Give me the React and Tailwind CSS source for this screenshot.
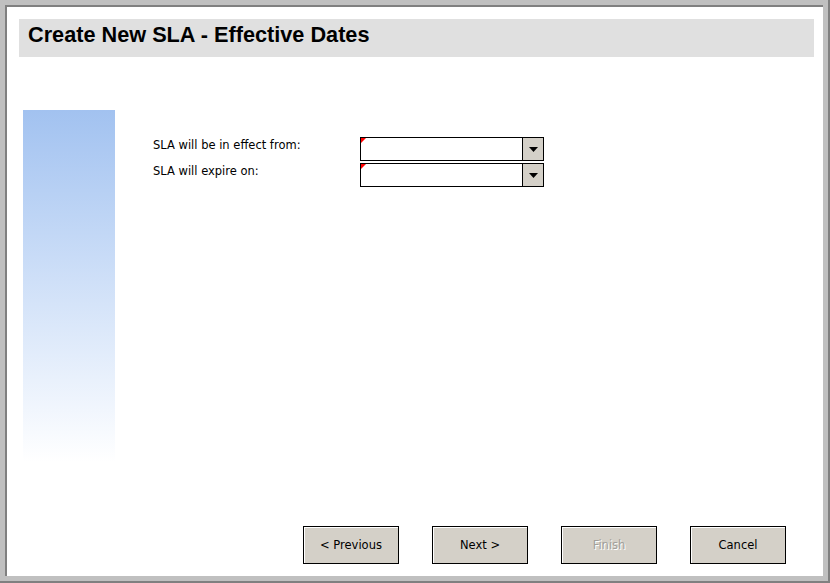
import React from "react";

const ui = { fontFamily: '"Liberation Sans", Arial, sans-serif' };
const win = { fontFamily: '"DejaVu Sans", Tahoma, sans-serif' };

const DateField = () => (
  <div className="relative flex h-[24px] w-[184px] border border-black bg-white">
    {/* required marker */}
    <svg className="absolute left-0 top-0" width="5" height="5" viewBox="0 0 5 5">
      <polygon points="0,0 5,0 0,5" fill="#ff0000" />
    </svg>
    <div className="flex-1" />
    <div className="flex w-[21px] items-center justify-center border-l border-black bg-[#d4d0c8]">
      <svg width="9" height="5" viewBox="0 0 9 5">
        <polygon points="0,0 9,0 4.5,5" fill="#000000" />
      </svg>
    </div>
  </div>
);

const WizardButton = ({ label, disabled }) => (
  <button
    type="button"
    disabled={disabled}
    className="h-[38px] w-[96px] border border-black bg-[#d4d0c8] pt-[1px] text-[11.5px] shadow-[inset_1px_1px_0_#ffffff]"
    style={win}
  >
    {disabled ? (
      <span className="text-[#a19f9a] [text-shadow:1px_1px_0_#ffffff]">{label}</span>
    ) : (
      <span className="text-black">{label}</span>
    )}
  </button>
);

const App = () => {
  return (
    <div className="h-[583px] w-[830px] border-b-2 border-r-2 border-[#808080]" style={ui}>
      <div className="h-full w-full border-[5px] border-[#c0c0c0]">
        <div className="flex h-full w-full flex-col border-l-2 border-t-2 border-[#808080] bg-white">
          {/* header */}
          <div className="ml-[12px] mr-[9px] mt-[12px] h-[38px] bg-[#e0e0e0] pl-[9px] pt-[2px]">
            <h1 className="text-[21.7px] font-bold leading-[28px] text-black">Create New SLA - Effective Dates</h1>
          </div>

          <div className="mt-[53px] flex pl-[16px]">
            <div className="h-[352px] w-[92px] bg-gradient-to-b from-[#a2c2f0] to-[#ffffff]" />
            <div className="ml-[38px] mt-[27px] flex flex-col gap-[2px]" style={win}>
              <div className="flex items-center">
                <label className="w-[207px] -translate-y-[3px] text-[11.5px] text-black">SLA will be in effect from:</label>
                <DateField />
              </div>
              <div className="flex items-center">
                <label className="w-[207px] -translate-y-[3px] text-[11.5px] text-black">SLA will expire on:</label>
                <DateField />
              </div>
            </div>
          </div>

          <div className="mb-[12px] mr-[37px] mt-auto flex justify-end gap-[33px]">
            <WizardButton label="< Previous" />
            <WizardButton label="Next >" />
            <WizardButton label="Finish" disabled />
            <WizardButton label="Cancel" />
          </div>
        </div>
      </div>
    </div>
  );
};

export default App;
